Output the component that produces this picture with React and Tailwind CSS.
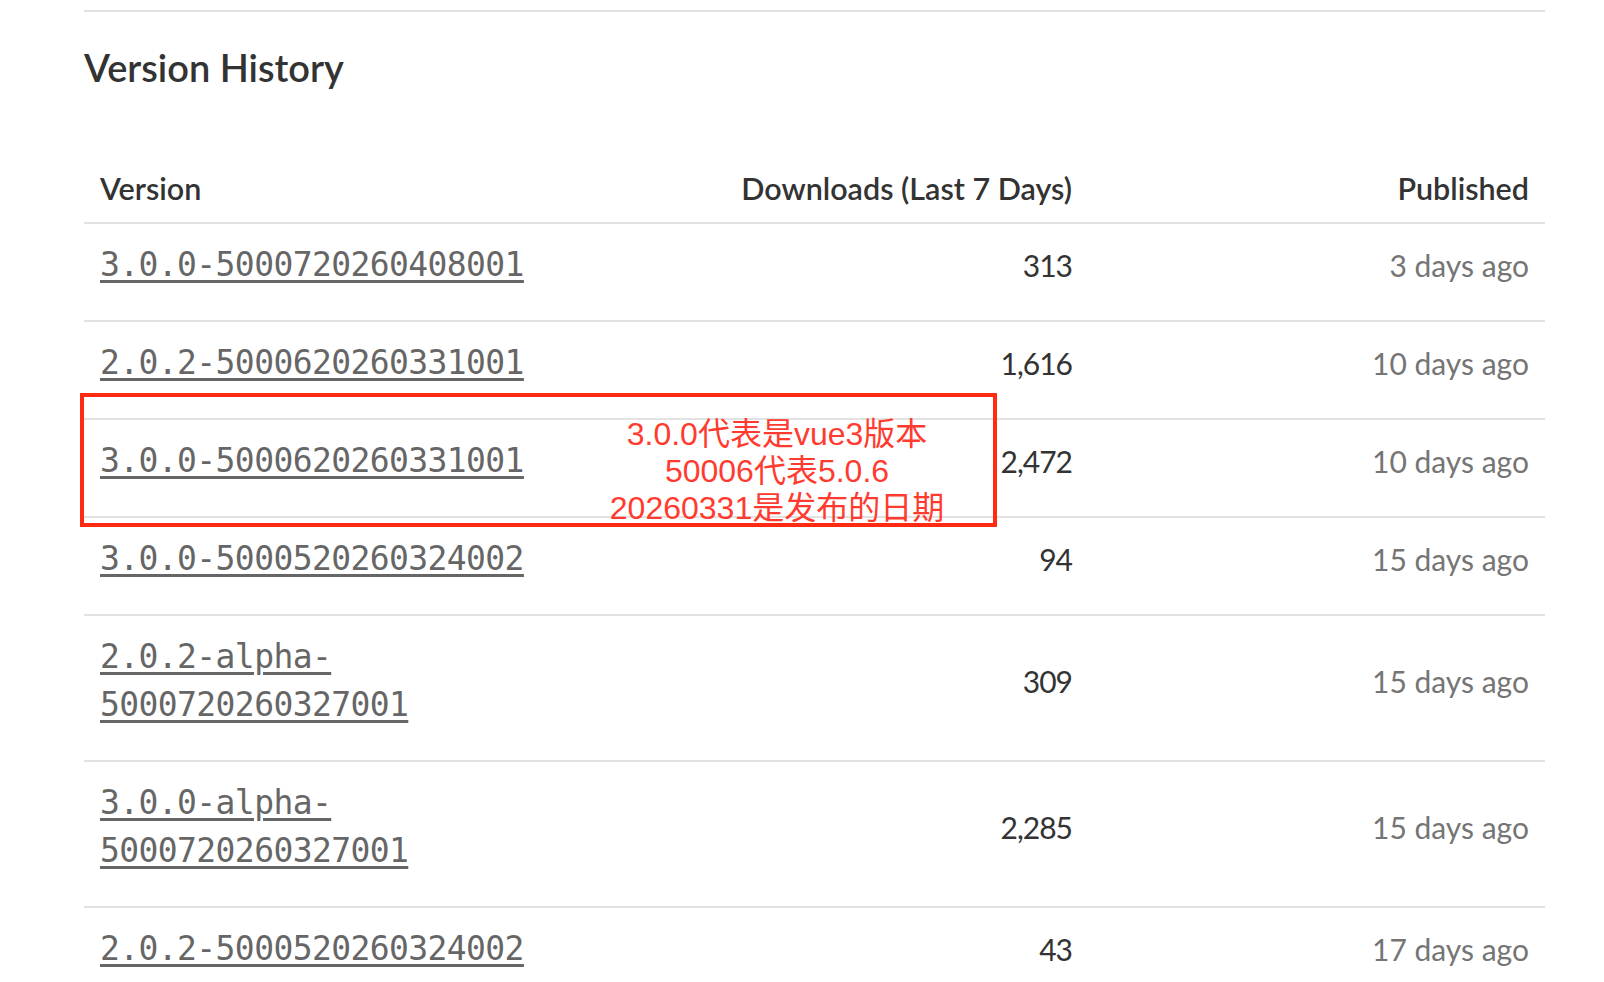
const versions = [
  { v: "3.0.0-5000720260408001", downloads: "313", published: "3 days ago" },
  { v: "2.0.2-5000620260331001", downloads: "1,616", published: "10 days ago" },
  { v: "3.0.0-5000620260331001", downloads: "2,472", published: "10 days ago" },
  { v: "3.0.0-5000520260324002", downloads: "94", published: "15 days ago" },
  { v: "2.0.2-alpha-5000720260327001", downloads: "309", published: "15 days ago" },
  { v: "3.0.0-alpha-5000720260327001", downloads: "2,285", published: "15 days ago" },
  { v: "2.0.2-5000520260324002", downloads: "43", published: "17 days ago" },
];

const sans = "font-['Lato','Noto_Sans',sans-serif]";

export default function App() {
  return (
    <div className="relative min-h-screen bg-white overflow-hidden">
      <div className="pl-[84px] pr-[59px]">
        <div className="mt-[10px] border-t-2 border-[#e2e2e2]" />

        {/* Title */}
        <h2 className={`${sans} mt-[31px] text-[38px] leading-[48px] font-semibold text-[#333]`}>
          Version History
        </h2>

        {/* Table header */}
        <div
          className={`${sans} mt-[77px] grid grid-cols-[560px_444px_1fr] border-b-2 border-[#e2e2e2] pb-[14px] text-[30.5px] leading-[40px] font-semibold text-[#333]`}
        >
          <div className="px-4">Version</div>
          <div className="px-4 text-right">Downloads (Last 7 Days)</div>
          <div className="px-4 text-right">Published</div>
        </div>

        {/* Rows */}
        {versions.map((row) => (
          <div
            key={row.v}
            className="grid grid-cols-[560px_444px_1fr] items-center border-b-2 border-[#e2e2e2] pt-[17px] pb-[31px]"
          >
            <div className="px-4">
              <a
                href="#"
                className="font-['DejaVu_Sans_Mono',monospace] text-[33px] leading-[48px] tracking-[-0.6px] text-[#666] underline decoration-[2.5px] underline-offset-[4px]"
              >
                {row.v}
              </a>
            </div>
            <div className={`${sans} px-4 text-right text-[30px] leading-[48px] tracking-[-1px] text-[#333]`}>
              {row.downloads}
            </div>
            <div className={`${sans} px-4 text-right text-[30px] leading-[48px] text-[#757575]`}>
              {row.published}
            </div>
          </div>
        ))}
      </div>

      {/* Annotation overlay */}
      <div className="absolute left-[80px] top-[393px] h-[134px] w-[917px] border-4 border-[#ff2a12]" />
      <div className="absolute left-[577px] top-[416px] w-[400px] text-center font-['Liberation_Sans','Noto_Sans_CJK_SC',sans-serif] text-[32px] leading-[37px] text-[#ff3b30]">
        <div>3.0.0代表是vue3版本</div>
        <div>50006代表5.0.6</div>
        <div>20260331是发布的日期</div>
      </div>
    </div>
  );
}
